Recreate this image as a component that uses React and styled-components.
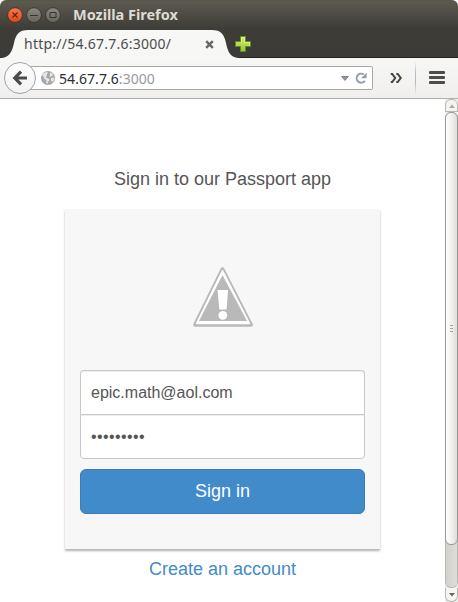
import React from "react";
import styled, { createGlobalStyle } from "styled-components";

const Global = createGlobalStyle`
  * { box-sizing: border-box; }
  body { margin: 0; background: #fff; overflow: hidden; }
  svg { display: block; flex: none; }
`;

const Window = styled.div`
  width: 458px;
  height: 602px;
  display: flex;
  flex-direction: column;
  overflow: hidden;
  background: #fff;
  font-family: "Noto Sans", "Open Sans", sans-serif;
`;

const Chrome = styled.header`
  height: 58px;
  flex: none;
  border-radius: 6px 6px 0 0;
  background: linear-gradient(#57544b 0, #5c594f 2px, #3d3c37 29px, #3c3b37 57px, #24231f 57px);
`;

const TitleBar = styled.div`
  height: 30px;
  display: flex;
  align-items: center;
  padding: 0 0 1px 7px;
  gap: 3px;
`;

const Title = styled.h1`
  margin: 0 0 2px 9px;
  font-size: 14.5px;
  line-height: 20px;
  font-weight: 700;
  letter-spacing: -0.02px;
  color: #dfdbd2;
  white-space: nowrap;
`;

const TabStrip = styled.div`
  height: 28px;
  display: flex;
`;

const Tab = styled.div`
  position: relative;
  width: 235px;
  height: 28px;
  display: flex;
  align-items: center;
  padding-left: 24px;
`;

const TabShape = styled.svg`
  position: absolute;
  left: 0;
  top: 0;
`;

const TabLabel = styled.span`
  position: relative;
  width: 181px;
  font-size: 14px;
  line-height: 20px;
  letter-spacing: 0.24px;
  color: #4c4c4c;
  white-space: nowrap;
`;

const TabClose = styled.svg`
  position: relative;
`;

const NewTab = styled.button`
  display: flex;
  align-items: flex-start;
  border: 0;
  padding: 6px 0 0;
  background: none;
  height: 28px;
`;

const Toolbar = styled.div`
  height: 41px;
  flex: none;
  display: flex;
  align-items: center;
  padding: 0 0 0 4px;
  background: linear-gradient(#f7f7f6, #f0efee);
  border-bottom: 1px solid #b4b1aa;
`;

const BackButton = styled.button`
  width: 32px;
  height: 32px;
  flex: none;
  padding: 0;
  display: grid;
  place-items: center;
  border: 1px solid #99a3b0;
  border-radius: 50%;
  background: linear-gradient(#fdfdfd, #f3f3f2);
  z-index: 1;
`;

const AddressBar = styled.div`
  width: 345px;
  height: 24px;
  margin-left: -8px;
  padding: 0 5px 0 13px;
  display: flex;
  align-items: center;
  border: 1px solid #aaa79f;
  border-left: 0;
  border-radius: 0 2px 2px 0;
  background: #fff;
`;

const Url = styled.span`
  flex: 1;
  margin-left: 4px;
  padding-top: 1px;
  font-size: 14px;
  line-height: 20px;
  letter-spacing: 0.06px;
  color: #2e2e2e;
  white-space: nowrap;
`;

const Port = styled.span`
  color: #999;
`;

const ReloadIcon = styled.svg`
  margin-left: 6px;
`;

const OverflowIcon = styled.svg`
  margin-left: 17px;
`;

const Separator = styled.i`
  width: 1px;
  height: 34px;
  margin: 0 13px;
  background: linear-gradient(#c3c8ce00, #b4bbc4 35%, #b4bbc4 65%, #c3c8ce00);
`;

const Viewport = styled.div`
  flex: 1;
  min-height: 0;
  display: flex;
`;

const Page = styled.main`
  flex: 1;
  display: flex;
  flex-direction: column;
  align-items: center;
  font-family: "Liberation Sans", Arial, sans-serif;
`;

const Heading = styled.h2`
  margin: 70px 0 19px;
  font-size: 18px;
  font-weight: 400;
  line-height: 21px;
  color: #555;
`;

const Card = styled.form`
  width: 315px;
  height: 340px;
  padding: 58px 15px 0;
  display: flex;
  flex-direction: column;
  background: #f7f7f7;
  box-shadow: 0 2px 2px rgba(0, 0, 0, 0.3);
`;

const Warning = styled.svg`
  margin: 0 auto 43px;
`;

const Field = styled.input`
  width: 100%;
  height: ${(p) => (p.$last ? 45 : 44)}px;
  padding: 0 10px;
  border: 1px solid #c8c8c8;
  border-bottom-width: ${(p) => (p.$last ? 1 : 0)}px;
  border-radius: ${(p) => (p.$last ? "0 0 4px 4px" : "4px 4px 0 0")};
  background: #fff;
  box-shadow: inset 0 1px 1px rgba(0, 0, 0, 0.075);
  outline: 0;
  font: 16px "Liberation Sans", Arial, sans-serif;
  letter-spacing: ${(p) => (p.$last ? "0.4px" : "normal")};
  color: #555;
`;

const SubmitButton = styled.button`
  height: 45px;
  margin-top: 10px;
  padding: 0;
  border: 1px solid #357ebd;
  border-radius: 6px;
  background: #428bca;
  color: #fff;
  font: 18px "Liberation Sans", Arial, sans-serif;
`;

const AccountLink = styled.a`
  margin-top: 10px;
  font-size: 18px;
  line-height: 21px;
  color: #428bca;
`;

const Scrollbar = styled.div`
  width: 13px;
  display: flex;
  flex-direction: column;
  background: #f0efee;
`;

const ScrollButton = styled.div`
  height: ${(p) => (p.$down ? 14 : 13)}px;
  display: grid;
  place-items: center;
  border: 1px solid #b9b6b0;
  border-top-width: ${(p) => (p.$down ? 0 : 1)}px;
  border-radius: ${(p) => (p.$down ? "0 0 6px 6px" : "6px 6px 0 0")};
  background: #f5f4f3;
`;

const Track = styled.div`
  flex: 1;
  border: 1px solid #b9b6b0;
  border-width: 0 0 1px;
  border-radius: 6px;
  background: linear-gradient(90deg, #b9b6b0 1px, #d2d1ce 1px, #deddda 12px, #b9b6b0 12px);
`;

const Thumb = styled.div`
  height: 433px;
  display: flex;
  flex-direction: column;
  align-items: center;
  justify-content: center;
  gap: 2px;
  border: 1px solid #999791;
  border-radius: 6px;
  background: linear-gradient(90deg, #fff, #f3f2f1 45%, #dedddb);
`;

const Grip = styled.i`
  width: 3px;
  height: 1px;
  background: #a7a49f;
`;

const WindowButton = ({ kind }) => (
  <svg width="16" height="18" viewBox="0 0 16 18">
    <defs>
      <linearGradient id={"wb" + kind} x1="0" y1="0" x2="0" y2="1">
        <stop stopColor={kind === "close" ? "#f47b4f" : "#8b8980"} />
        <stop offset="1" stopColor={kind === "close" ? "#dd4814" : "#65635b"} />
      </linearGradient>
    </defs>
    <circle cx="8" cy="9.1" r="7.4" fill={`url(#wb${kind})`} stroke="#33312b" strokeWidth=".8" />
    <g fill="none" stroke={kind === "close" ? "#63220e" : "#35342e"} strokeWidth="1">
      {kind === "close" && <path d="M5.5 6.5l5 5m0-5l-5 5" strokeWidth="1.2" />}
      {kind === "min" && <path d="M4 9.5h8" />}
      {kind === "max" && <path d="M5 6.5h6v5h-6z" />}
    </g>
  </svg>
);

export default function App() {
  return (
    <Window>
      <Global />
      <Chrome>
        <TitleBar>
          <WindowButton kind="close" />
          <WindowButton kind="min" />
          <WindowButton kind="max" />
          <Title>Mozilla Firefox</Title>
        </TitleBar>
        <TabStrip>
          <Tab>
            <TabShape width="242" height="28" viewBox="0 0 242 28">
              <path d="M0 28C9 28 12 22 14 13C16 4 19 0 28 0H212C221 0 224 4 226 13C228 23 231 28 240 28Z" fill="#f7f7f6" />
            </TabShape>
            <TabLabel>http://54.67.7.6:3000/</TabLabel>
            <TabClose width="9" height="9" viewBox="0 0 9 9">
              <path d="M1.2 1.2l6.6 6.6m0-6.6L1.2 7.8" stroke="#666" strokeWidth="2.4" />
            </TabClose>
          </Tab>
          <NewTab type="button" aria-label="New tab">
            <svg width="16" height="16" viewBox="0 0 16 16">
              <defs>
                <linearGradient id="plus" x1="0" y1="0" x2="0" y2="1">
                  <stop stopColor="#d8ee72" />
                  <stop offset="1" stopColor="#9bc52c" />
                </linearGradient>
              </defs>
              <path d="M5.5 .5h5v5h5v5h-5v5h-5v-5h-5v-5h5z" fill="url(#plus)" stroke="#5e8e25" />
              <path d="M6.5 6.5v-5h3v5h5v3" fill="none" stroke="#e6f7a0" strokeOpacity=".6" />
            </svg>
          </NewTab>
        </TabStrip>
      </Chrome>
      <Toolbar>
        <BackButton type="button" aria-label="Back">
          <svg width="16" height="16" viewBox="0 0 16 16" fill="none" stroke="#4b4b4b" strokeWidth="3.2">
            <path d="M9 1.7L2.8 8L9 14.3M3 8h12" />
          </svg>
        </BackButton>
        <AddressBar>
          <svg width="14" height="14" viewBox="0 0 14 14">
            <circle cx="7" cy="7" r="7" fill="#a7a7a7" />
            <path d="M1 3.7L3 2l3-1 1 1.1L5.6 3.4l.6 1L4.8 6l1.1 1.1 2 .7.7 1.5L7 11.1l-.4 2-1.3-1.4V9L3.2 7.7 2.4 5.5zM9.3 1.3l2.2 1.2.6 1.7-1.4.5-.7 1.3-1.5-.5.3-1.6zM10 7l2.5-.5.7 1.2-.8 2.3-1.3 1L9.8 9z" fill="#e7e7e7" />
          </svg>
          <Url>54.67.7.6<Port>:3000</Port></Url>
          <svg width="8" height="6" viewBox="0 0 8 6">
            <path d="M.7 1.5h6.6L4 5.5z" fill="#999" stroke="#707070" strokeWidth=".8" />
          </svg>
          <ReloadIcon width="12" height="13" viewBox="0 0 12 13">
            <path d="M8.6 2.4A4.5 4.5 0 1 0 9.8 8.8" fill="none" stroke="#929fac" strokeWidth="2" />
            <path d="M11.6 .7v5.5H6z" fill="#929fac" />
          </ReloadIcon>
        </AddressBar>
        <OverflowIcon width="12" height="10" viewBox="0 0 12 10" fill="none" stroke="#444" strokeWidth="2">
          <path d="M.8 1H2.2L5.2 5L2.2 9H.8M6.3 1H7.7L10.7 5L7.7 9H6.3" />
        </OverflowIcon>
        <Separator />
        <svg width="16" height="14" viewBox="0 0 16 14" fill="#4c4c4c">
          <rect y="0" width="16" height="3" rx="1" />
          <rect y="5" width="16" height="3" rx="1" />
          <rect y="10" width="16" height="3" rx="1" />
        </svg>
      </Toolbar>
      <Viewport>
        <Page>
          <Heading>Sign in to our Passport app</Heading>
          <Card>
            <Warning width="60" height="60" viewBox="0 0 60 60">
              <path d="M29.5 2.2L58 57.8H2Z" fill="#fff" stroke="#b9b9b9" strokeWidth="3.8" strokeLinejoin="round" />
              <path d="M29.5 3.5L56.5 56.5H3.5Z" fill="#fff" stroke="#fff" strokeWidth="1.4" strokeLinejoin="round" />
              <path d="M29.5 8L54 54H6Z" fill="#b9b9b9" />
              <path d="M24.5 23h10.5l-1.4 19.5h-7.3z" fill="#fff" />
              <circle cx="29.8" cy="48.3" r="4.4" fill="#fff" />
            </Warning>
            <Field type="text" aria-label="Email" defaultValue="epic.math@aol.com" />
            <Field $last type="password" aria-label="Password" defaultValue="123456789" />
            <SubmitButton type="button">Sign in</SubmitButton>
          </Card>
          <AccountLink>Create an account</AccountLink>
        </Page>
        <Scrollbar>
          <ScrollButton>
            <svg width="6" height="4" viewBox="0 0 6 4"><path d="M0 4L3 .5L6 4z" fill="#aaa" /></svg>
          </ScrollButton>
          <Track>
            <Thumb><Grip /><Grip /><Grip /></Thumb>
          </Track>
          <ScrollButton $down>
            <svg width="6" height="4" viewBox="0 0 6 4"><path d="M0 0L3 3.5L6 0z" fill="#666" /></svg>
          </ScrollButton>
        </Scrollbar>
      </Viewport>
    </Window>
  );
}
